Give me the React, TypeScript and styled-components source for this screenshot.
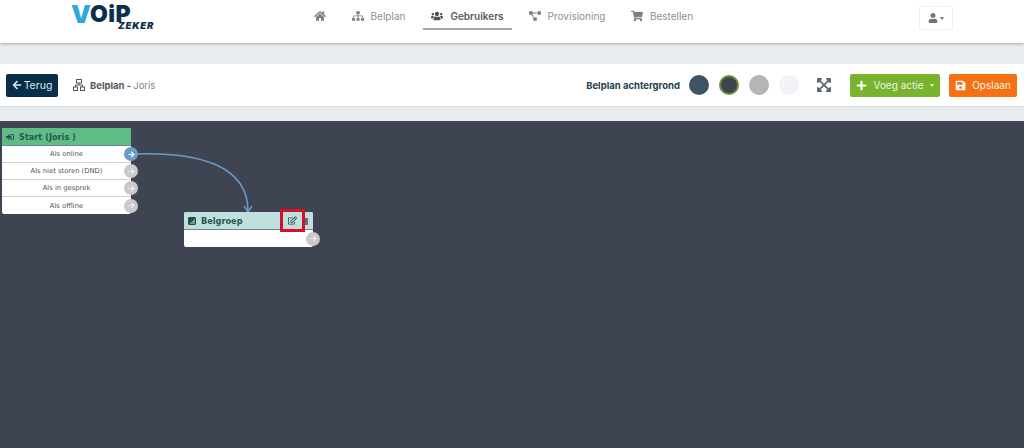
import styled, { createGlobalStyle } from "styled-components";
import { FaHome, FaSitemap, FaUsers, FaProjectDiagram, FaShoppingCart, FaUser, FaExpandArrowsAlt, FaPlus, FaSave, FaSignInAlt, FaRegEdit, FaArrowLeft, FaArrowRight } from "react-icons/fa";

const Global = createGlobalStyle`
    html, body { margin: 0; padding: 0; background: #e9ecef; }
    body { font-family: Inter, "Liberation Sans", sans-serif; overflow: hidden; }
`;
const Page = styled.div`
    width: 1024px;
    height: 448px;
    display: flex;
    flex-direction: column;
    overflow: hidden;
`;
const Header = styled.header`
    height: 43px;
    flex: none;
    background: #fff;
    box-shadow: 0 1px 3px rgba(0,0,0,.28);
    display: grid;
    grid-template-columns: 300px 1fr 105px;
    position: relative;
`;
const Logo = styled.div`
    padding: 6px 0 0 71px;
    display: flex;
    align-items: flex-start;
    font-family: Inter, sans-serif;
    font-weight: 900;
    letter-spacing: .5px;
    line-height: 17px;
    font-size: 23px;
    color: #0d2f4a;
`;
const LogoV = styled.span`
    color: #2ba9dc;
    font-size: 25px;
    letter-spacing: -1px;
`;
const LogoSmall = styled.span`
    font-size: 9.5px;
    line-height: 8px;
    letter-spacing: .8px;
    margin: 16px 0 0 -13px;
    font-style: italic;
`;
const Nav = styled.nav`
    display: flex;
    align-items: flex-start;
    padding-left: 6px;
`;
const NavItem = styled.a<{ $active?: boolean; $w: number }>`
    width: ${p => p.$w}px;
    box-sizing: border-box;
    height: 30px;
    padding-top: 3px;
    display: flex;
    align-items: center;
    justify-content: center;
    gap: 7px;
    font-size: 10px;
    font-weight: ${p => p.$active ? 600 : 400};
    color: ${p => p.$active ? "#555c63" : "#8a9096"};
    border-bottom: 2px solid ${p => p.$active ? "#a3a6a9" : "transparent"};
    svg { color: ${p => p.$active ? "#4b5258" : "#7a8086"}; font-size: 12px; }
`;
const UserWrap = styled.div`
    padding-top: 6px;
`;
const UserBtn = styled.div`
    width: 32px;
    height: 22px;
    border: 1px solid #f0f1f2;
    border-radius: 2px;
    display: flex;
    align-items: center;
    justify-content: center;
    gap: 2px;
    color: #6c757d;
    font-size: 10px;
`;
const Caret = styled.i`
    width: 0;
    height: 0;
    border-left: 2.5px solid transparent;
    border-right: 2.5px solid transparent;
    border-top: 3px solid currentColor;
`;
const Band = styled.div<{ $h: number }>`
    height: ${p => p.$h}px;
    flex: none;
    background: #e9ecef;
`;
const Toolbar = styled.div`
    height: 43px;
    flex: none;
    background: #fff;
    border-bottom: 1px solid #dee2e6;
    box-sizing: border-box;
    display: flex;
    align-items: center;
    padding: 0 7px 0 6px;
`;
const BackBtn = styled.button`
    width: 52px;
    height: 23px;
    margin-right: 15px;
    padding: 0;
    border: 0;
    border-radius: 2px;
    background: #072f4a;
    color: #dfe7ec;
    font: 400 10.5px Inter, sans-serif;
    display: flex;
    align-items: center;
    justify-content: center;
    gap: 2px;
    svg { font-size: 10px; }
`;
const Crumb = styled.div`
    display: flex;
    align-items: center;
    gap: 2px;
    font-size: 9.5px;
    color: #7f868c;
    flex: 1;
    svg { color: #555; margin-right: 3px; }
    b { color: #54595e; font-weight: 700; }
`;
const BgLabel = styled.span`
    font-size: 9.5px;
    font-weight: 700;
    color: #25404f;
    margin-right: 9px;
`;
const Swatch = styled.span<{ $c: string; $on?: boolean }>`
    width: 20px;
    height: 20px;
    margin-right: 10px;
    border-radius: 50%;
    box-sizing: border-box;
    background: ${p => p.$c};
    border: ${p => p.$on ? "2px solid #6f8f3d" : "none"};
`;
const Expand = styled.span`
    display: flex;
    color: #5f666c;
    font-size: 16px;
    margin: 0 18px 0 7px;
`;
const ActionBtn = styled.button<{ $bg: string }>`
    height: 23px;
    padding: 0;
    border: 0;
    border-radius: 2px;
    background: ${p => p.$bg};
    color: #eef3e6;
    font: 400 10px Inter, sans-serif;
    display: flex;
    align-items: center;
    justify-content: center;
    gap: 6px;
    svg { font-size: 11px; color: #fff; }
`;
const AddBtn = styled(ActionBtn)`
    width: 90px;
    margin-right: 9px;
`;
const SaveBtn = styled(ActionBtn)`
    width: 68px;
`;
const Canvas = styled.main`
    flex: 1;
    background: #3e4452;
    position: relative;
    overflow: hidden;
`;
const Wire = styled.svg`
    position: absolute;
    left: 0;
    top: 0;
`;
const Node = styled.div<{ $x: number; $y: number }>`
    position: absolute;
    left: ${p => p.$x}px;
    top: ${p => p.$y}px;
    width: 129px;
    background: #fff;
    border-radius: 2px;
`;
const NodeHead = styled.div<{ $bg: string }>`
    height: 18px;
    background: ${p => p.$bg};
    border-radius: 2px 2px 0 0;
    border-bottom: 1px solid #6e8a84;
    box-sizing: border-box;
    display: flex;
    align-items: center;
    gap: 5px;
    padding-left: 4px;
    font: 700 8.2px "DejaVu Sans", sans-serif;
    color: #2c5550;
    position: relative;
    svg { font-size: 8px; }
`;
const Port = styled.span<{ $on?: boolean }>`
    position: absolute;
    right: -7px;
    top: 50%;
    margin-top: -7px;
    width: 14px;
    height: 14px;
    border-radius: 50%;
    background: ${p => p.$on ? "#6b9ac9" : "#c9c9c9"};
    color: ${p => p.$on ? "#fff" : "#eee"};
    font-size: 7px;
    display: flex;
    align-items: center;
    justify-content: center;
`;
const Row = styled.div`
    height: 17px;
    box-sizing: border-box;
    border-bottom: 1px solid #cfd2d4;
    display: flex;
    align-items: center;
    justify-content: center;
    font: 400 6.8px "DejaVu Sans", sans-serif;
    color: #555;
    position: relative;
    &:last-child { border-bottom: 0; }
`;
const GroupIcon = styled.span`
    width: 8px;
    height: 8px;
    box-sizing: border-box;
    border-radius: 1px;
    background: linear-gradient(135deg, #2c4c4c 50%, #7d9696 50%);
    border: 1px solid #2c4c4c;
`;
const Mark = styled.span`
    position: absolute;
    left: 96px;
    top: -3px;
    width: 25px;
    height: 23px;
    box-sizing: border-box;
    border: 3px solid #d80f2a;
    display: flex;
    align-items: center;
    justify-content: center;
    color: #2c4c4c;
    svg { font-size: 9px; }
`;
const Stub = styled.span`
    position: absolute;
    right: 5px;
    top: 6px;
    width: 3px;
    height: 7px;
    background: #5b7472;
`;

const rows = ["Als online", "Als niet storen (DND)", "Als in gesprek", "Als offline"];

export default function App() {
    return <Page>
        <Global />
        <Header>
            <Logo><LogoV>V</LogoV>OiP<LogoSmall>ZEKER</LogoSmall></Logo>
            <Nav>
                <NavItem $w={28}><FaHome /></NavItem>
                <NavItem $w={89}><FaSitemap />Belplan</NavItem>
                <NavItem $active $w={89}><FaUsers />Gebruikers</NavItem>
                <NavItem $w={110}><FaProjectDiagram />Provisioning</NavItem>
                <NavItem $w={80}><FaShoppingCart />Bestellen</NavItem>
            </Nav>
            <UserWrap><UserBtn><FaUser /><Caret /></UserBtn></UserWrap>
        </Header>
        <Band $h={21} />
        <Toolbar>
            <BackBtn><FaArrowLeft />Terug</BackBtn>
            <Crumb>
                <svg width="12" height="12" viewBox="0 0 12 12" fill="none" stroke="currentColor">
                    <rect x="3.5" y="0.5" width="5" height="3.5" />
                    <rect x="0.5" y="8" width="4" height="3.5" />
                    <rect x="7.5" y="8" width="4" height="3.5" />
                    <path d="M6 4v2M2.5 8V6h7v2" />
                </svg>
                <b>Belplan -</b> Joris
            </Crumb>
            <BgLabel>Belplan achtergrond</BgLabel>
            <Swatch $c="#3f5463" />
            <Swatch $c="#3e4452" $on />
            <Swatch $c="#b5b5b5" />
            <Swatch $c="#f2f3f6" />
            <Expand><FaExpandArrowsAlt /></Expand>
            <AddBtn $bg="#7ab32e"><FaPlus />Voeg actie<Caret /></AddBtn>
            <SaveBtn $bg="#f57113"><FaSave />Opslaan</SaveBtn>
        </Toolbar>
        <Band $h={14} />
        <Canvas>
            <Wire width="300" height="110">
                <path d="M131 33 C 200 30, 248 45, 248 90" fill="none" stroke="#6b9ac9" strokeWidth="1.5" />
                <path d="M244 85 L248 91 L252 85" fill="none" stroke="#6b9ac9" strokeWidth="1.5" />
            </Wire>
            <Node $x={2} $y={7}>
                <NodeHead $bg="#5dbd85"><FaSignInAlt />Start (Joris )</NodeHead>
                {rows.map((r, i) => <Row key={r}>{r}<Port $on={i === 0}><FaArrowRight /></Port></Row>)}
            </Node>
            <Node $x={184} $y={91}>
                <NodeHead $bg="#bfe0dc"><GroupIcon />Belgroep<Stub /><Mark><FaRegEdit /></Mark></NodeHead>
                <Row><Port><FaArrowRight /></Port></Row>
            </Node>
        </Canvas>
    </Page>;
}
